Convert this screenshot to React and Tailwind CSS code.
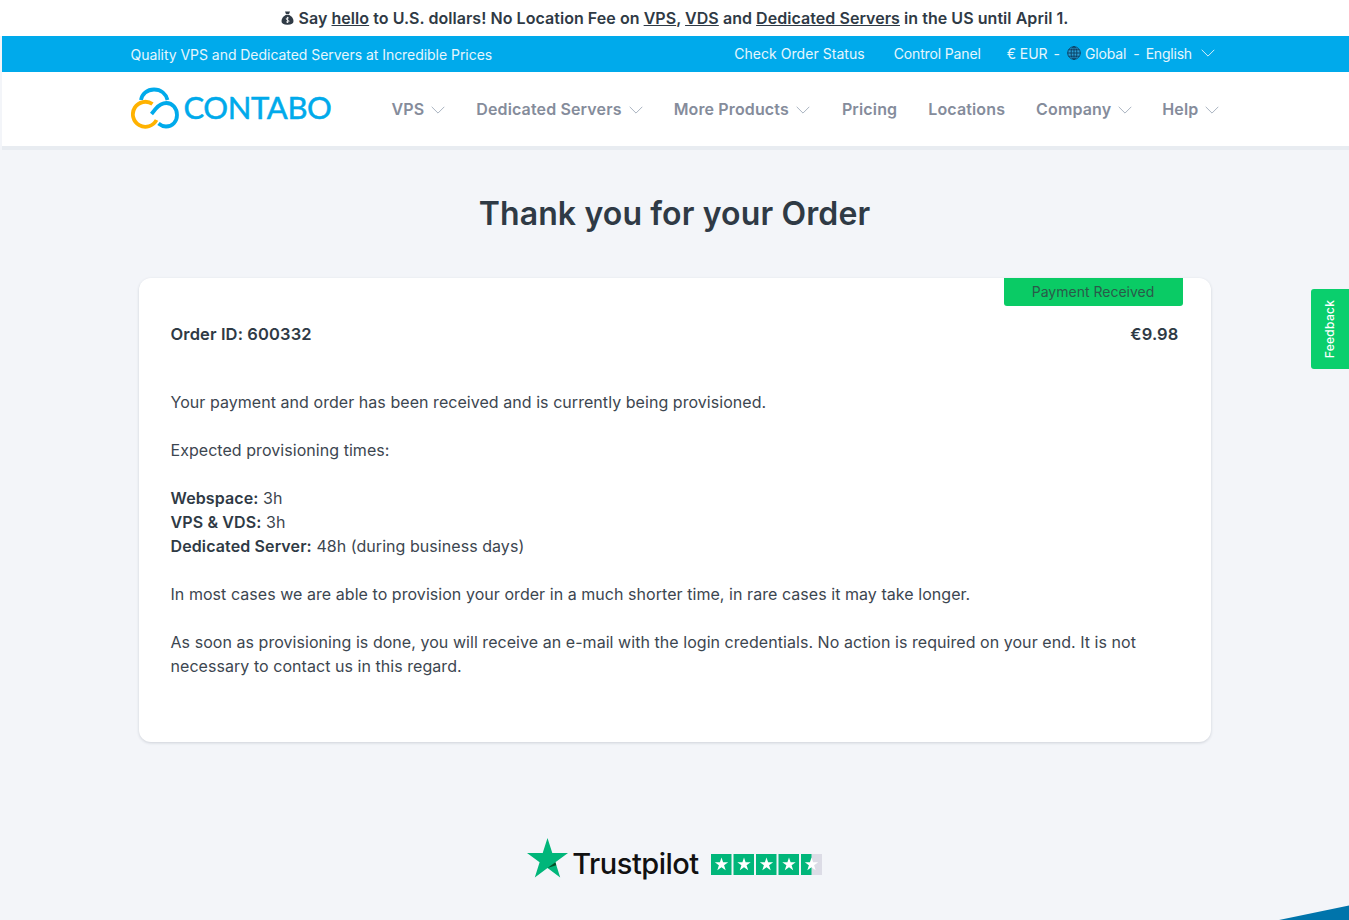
import React from "react";

const Chevron = ({ className = "" }) => (
  <svg viewBox="0 0 14 8" width="14" height="8" fill="none" stroke="currentColor" strokeWidth="1" className={className}>
    <path d="M.7 .8l6.300 6.300 6.300-6.300" />
  </svg>
);

const NavItem = ({ label, chevron = true, className = "" }) => (
  <div className={`flex items-center gap-[7px] ${className}`}>
    <span>{label}</span>
    {chevron && <Chevron className="text-[#a9b3c0] mt-[1px]" />}
  </div>
);

const Logo = () => (
  <div className="flex items-center -mt-[2px]">
    <svg width="48" height="42" viewBox="0 0 48 42" fill="none" strokeWidth="3.8" strokeLinecap="butt" className="shrink-0">
      <path d="M10 13C11 7 16 2.500 23 2.500S35 7 36.500 13" stroke="#00aaeb" />
      <path d="M21.500 17A12.500 12.500 0 1 0 25.500 33" stroke="#ffb200" />
      <path d="M27.500 36.500C30 38.500 32.500 39.500 35 39.500C41.500 39.500 46 34.500 46 28C46 21.500 41.500 16 35.500 16C31 16 27.500 18.500 24.500 22L20.500 27" stroke="#00aaeb" />
    </svg>
    <span className="ml-[5px] -mt-[1px] text-[31px] leading-none font-normal text-[#00aaeb] tracking-[-0.4px] [-webkit-text-stroke:0.5px_#00aaeb] font-['Lato','Inter',sans-serif]">CONTABO</span>
  </div>
);

const MoneyBag = () => (
  <svg width="13" height="14" viewBox="0 0 13 14" className="shrink-0">
    <path d="M4 .6h5L8 3.300H5z" fill="#2f3a45" />
    <path d="M4.600 4h3.800c2.300 1.300 4.100 3.700 4.100 6 0 2.500-2 3.700-6 3.700s-6-1.200-6-3.700c0-2.300 1.800-4.700 4.100-6z" fill="#2f3a45" />
    <path d="M8 7.200c-.4-.5-2.800-.7-2.800.7 0 1.500 2.900.8 2.900 2.200 0 1.300-2.500 1.200-3.100.6M6.500 5.900v6.100" stroke="#fff" strokeWidth=".8" fill="none" />
  </svg>
);

const Globe = () => (
  <svg width="14" height="14" viewBox="0 0 14 14" fill="none" stroke="#0a3a5c" strokeWidth=".9" className="shrink-0">
    <circle cx="7" cy="7" r="6.300" fill="#2a9fd6" />
    <ellipse cx="7" cy="7" rx="2.900" ry="6.300" />
    <path d="M7 .7v12.600M.7 7h12.600M1.600 3.800h10.800M1.600 10.200h10.800" />
  </svg>
);

const Star = ({ x, fill = "#fff" }) => (
  <polygon
    transform={`translate(${x} 0)`}
    fill={fill}
    points="10.500,3.500 12.100,8.300 17.200,8.300 13.100,11.300 14.700,16.200 10.500,13.200 6.300,16.200 7.900,11.300 3.800,8.300 8.900,8.300"
  />
);

const TrustStars = () => (
  <svg width="111" height="21" viewBox="0 0 111 21" className="shrink-0">
    <rect x="0" width="20.500" height="21" fill="#00b67a" />
    <rect x="22.500" width="20.500" height="21" fill="#00b67a" />
    <rect x="45" width="20.500" height="21" fill="#00b67a" />
    <rect x="67.500" width="20.500" height="21" fill="#00b67a" />
    <rect x="90" width="21" height="21" fill="#dcdce6" />
    <rect x="90" width="10.500" height="21" fill="#00b67a" />
    <Star x={0} />
    <Star x={22.500} />
    <Star x={45} />
    <Star x={67.500} />
    <Star x={90} />
  </svg>
);

const Bold = ({ children }) => <b className="font-semibold tracking-[0.12px] text-[#2f3a45]">{children}</b>;

export default function App() {
  return (
    <div className="relative h-[920px] overflow-hidden bg-[#f3f5f9] font-['Inter',sans-serif] text-[#2f3a45]">
      <header className="ml-[2px]">
        <div className="-ml-[2px] flex h-[36px] items-center justify-center gap-[5px] bg-white text-[16px] font-semibold tracking-[0.05px] text-[#2f3a45]">
          <MoneyBag />
          <p>
            Say <span className="underline">hello</span> to U.S. dollars! No Location Fee on <span className="underline">VPS</span>, <span className="underline">VDS</span> and <span className="underline">Dedicated Servers</span> in the US until April 1.
          </p>
        </div>
        <div className="flex h-[36px] items-center bg-[#00aaeb] pl-[128.500px] text-[14px] text-[#e6f6fd]">
          <span className="tracking-[-0.04px]">Quality VPS and Dedicated Servers at Incredible Prices</span>
          <div className="-mt-[2px] ml-[242px] flex items-center tracking-[-0.05px]">
            <span className="tracking-[0.05px]">Check Order Status</span>
            <span className="ml-[29px] tracking-[-0.15px]">Control Panel</span>
            <span className="ml-[26px]">€ EUR</span>
            <span className="ml-[6px]">-</span>
            <span className="ml-[7px] flex items-center gap-[4px] tracking-[-0.15px]"><Globe />Global</span>
            <span className="ml-[7px]">-</span>
            <span className="ml-[6px] tracking-[-0.2px]">English</span>
            <Chevron className="ml-[9px] text-[#d5effb]" />
          </div>
        </div>
        <nav className="flex h-[74px] items-center bg-white pl-[128.500px] text-[16px] font-semibold tracking-[0.14px] text-[#858c9b]">
          <Logo />
          <div className="ml-[60px] flex items-center">
            <NavItem label="VPS" />
            <NavItem label="Dedicated Servers" className="ml-[31px]" />
            <NavItem label="More Products" className="ml-[31px]" />
            <NavItem label="Pricing" chevron={false} className="ml-[32px]" />
            <NavItem label="Locations" chevron={false} className="ml-[31px]" />
            <NavItem label="Company" className="ml-[31px]" />
            <NavItem label="Help" className="ml-[30px]" />
          </div>
        </nav>
        <div className="h-[4px] bg-[#e8ecf1]" />
      </header>

      <main className="flex flex-col items-center">
        <h1 className="mt-[44px] text-[32px] leading-[40px] font-semibold tracking-[0.13px] text-[#2f3a45]">Thank you for your Order</h1>
        <section className="relative mt-[44px] h-[464px] w-[1072px] rounded-[12px] bg-white px-[32px] shadow-[0_1px_3px_rgba(40,50,70,0.18)]">
          <div className="absolute top-0 right-[28px] flex h-[28px] w-[179px] items-center justify-center rounded-b-[3px] bg-[#0acb65] pb-[1px] text-[14px] text-[#2a5a4a]">
            Payment Received
          </div>
          <div className="flex justify-between pt-[44px] text-[16.500px] leading-[24px] font-semibold tracking-[0.13px]">
            <span>Order ID: 600332</span>
            <span>€9.98</span>
          </div>
          <div className="mt-[44px] text-[16px] leading-[24px] tracking-[0.05px] text-[#3c4650]">
            <p>Your payment and order has been received and is currently being provisioned.</p>
            <p className="mt-[24px]">Expected provisioning times:</p>
            <p className="mt-[24px]"><Bold>Webspace:</Bold> 3h</p>
            <p><Bold>VPS &amp; VDS:</Bold> 3h</p>
            <p><Bold>Dedicated Server:</Bold> 48h (during business days)</p>
            <p className="mt-[24px]">In most cases we are able to provision your order in a much shorter time, in rare cases it may take longer.</p>
            <p className="mt-[24px]">As soon as provisioning is done, you will receive an e-mail with the login credentials. No action is required on your end. It is not necessary to contact us in this regard.</p>
          </div>
        </section>

        <div className="mt-[96px] flex items-center">
          <svg width="41" height="40" viewBox="0 0 41 40" className="shrink-0">
            <polygon fill="#00b67a" points="20.500,0 25.300,15 41,15 28.400,24.200 33.200,39.500 20.500,30 7.800,39.500 12.600,24.200 0,15 15.700,15" />
            <polygon fill="#005128" points="28.400,24.200 29.300,27.300 20.500,30" />
          </svg>
          <span className="mt-[10px] ml-[4px] mr-[12px] text-[29px] leading-none font-medium tracking-[-0.5px] text-[#111]">Trustpilot</span>
          <div className="mt-[12px]"><TrustStars /></div>
        </div>
      </main>

      <div className="absolute top-[289px] right-0 flex h-[80px] w-[38px] items-center justify-center rounded-l-[3px] bg-[#0acf6d]">
        <span className="-rotate-90 whitespace-nowrap text-[12px] font-medium tracking-[0.3px] text-white">Feedback</span>
      </div>

      <svg className="absolute right-0 bottom-0" width="70" height="15" viewBox="0 0 70 15">
        <polygon points="70,0.500 70,15 0,15" fill="#0074ab" />
      </svg>
    </div>
  );
}
